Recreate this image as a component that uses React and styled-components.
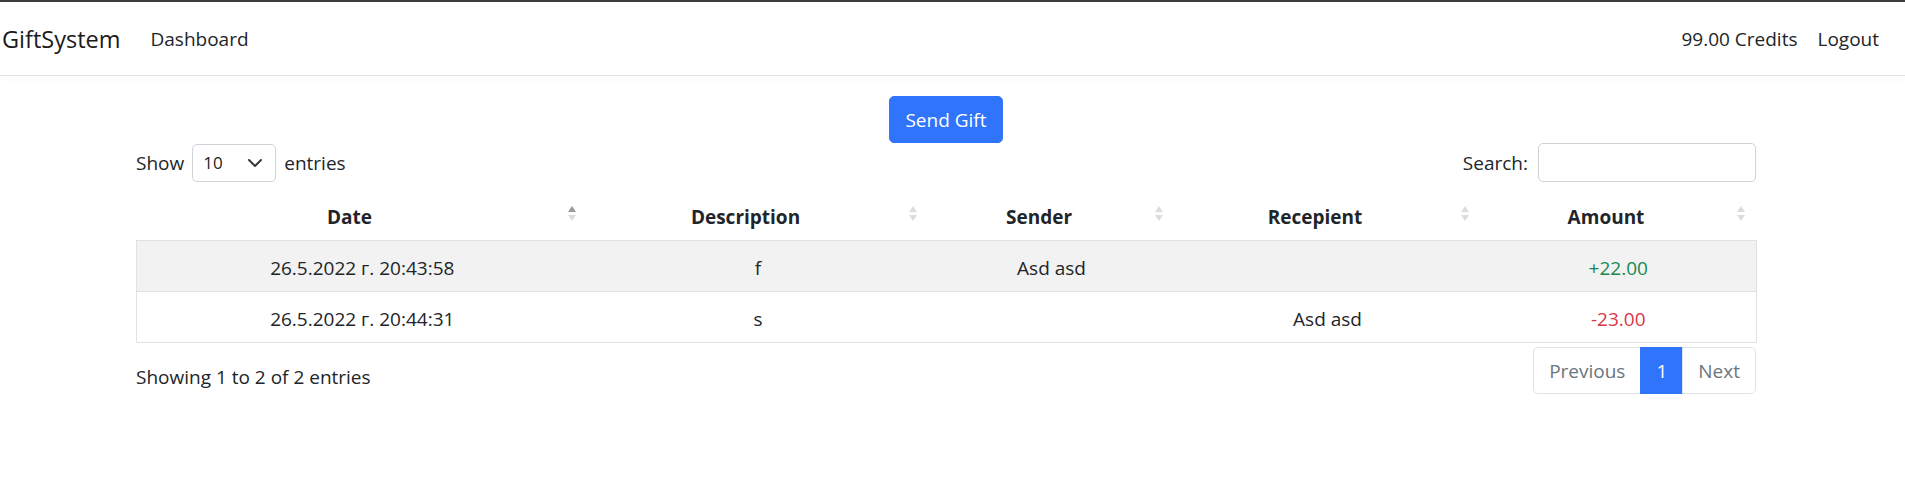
import React from 'react';
import styled, { createGlobalStyle } from 'styled-components';

const GlobalStyle = createGlobalStyle`
  html, body { margin: 0; padding: 0; background: #fff; }
  body {
    font-family: "Open Sans", "Noto Sans", sans-serif;
    font-size: 19px;
    line-height: 30px;
    color: #212529;
    border-top: 2px solid #3c3c3c;
  }
  * { box-sizing: border-box; }
`;

const Navbar = styled.nav`
  height: 74px;
  display: flex;
  align-items: center;
  padding: 0 16px 0 2px;
  border-bottom: 1px solid #dee2e6;
  box-shadow: 0 0.25rem 0.75rem rgba(0, 0, 0, 0.02);
`;

const Brand = styled.a`
  font-size: 23.5px;
  color: #1a1a1a;
  margin-right: 20px;
  text-decoration: none;
`;

const NavLink = styled.a`
  padding: 0 10px;
  color: #212529;
  text-decoration: none;
`;

const NavRight = styled.div`
  margin-left: auto;
  display: flex;
  align-items: center;
`;

const Container = styled.main`
  width: 1620px;
  margin: 20px 0 0 136px;
`;

const Center = styled.div`
  display: flex;
  justify-content: center;
`;

const PrimaryButton = styled.button`
  font-family: inherit;
  font-size: 19px;
  line-height: 30px;
  padding: 7.5px 15px;
  color: #fff;
  background: #2f74fa;
  border: 1px solid #2f74fa;
  border-radius: 5px;
`;

const Controls = styled.div`
  display: flex;
  justify-content: space-between;
  align-items: center;
  height: 39px;
`;

const Label = styled.label`
  display: flex;
  align-items: center;
  gap: ${(p) => p.$gap || 8}px;
`;

const SelectBox = styled.div`
  width: 84px;
  height: 38px;
  border: 1px solid #ced4da;
  border-radius: 5px;
  display: flex;
  align-items: center;
  justify-content: space-between;
  padding: 0 12px 0 10px;
  font-size: 17px;
`;

const SearchInput = styled.div`
  width: 218px;
  height: 39px;
  border: 1px solid #ced4da;
  border-radius: 5px;
`;

const Table = styled.table`
  width: 1620px;
  margin-top: 7px;
  border-collapse: collapse;
  table-layout: fixed;
`;

const Th = styled.th`
  position: relative;
  height: 51px;
  padding: 13px 37.5px 8px 12.5px;
  font-weight: 700;
  text-align: center;
  border-bottom: 1px solid #dee2e6;
`;

const SortIcon = styled.span`
  position: absolute;
  right: 12px;
  top: 17px;
  display: flex;
  flex-direction: column;
  gap: 3px;
`;

const Row = styled.tr`
  background: ${(p) => (p.$striped ? '#f2f2f2' : '#fff')};
  border-bottom: 1px solid #dee2e6;
  td:first-child { border-left: 1px solid #dee2e6; }
  td:last-child { border-right: 1px solid #dee2e6; }
`;

const Td = styled.td`
  height: 51px;
  padding: 12px 12.5px 8px;
  text-align: center;
  color: ${(p) => p.$color || '#212529'};
`;

const Footer = styled.div`
  display: flex;
  justify-content: space-between;
  align-items: flex-start;
  margin-top: 4px;
`;

const Info = styled.div`
  padding-top: 15px;
`;

const Pagination = styled.ul`
  display: flex;
  list-style: none;
  margin: 0;
  padding: 0;
`;

const PageLink = styled.li`
  padding: 7.5px 15px;
  line-height: 30px;
  border: 1px solid ${(p) => (p.$active ? '#2f74fa' : '#dee2e6')};
  margin-left: -1px;
  color: ${(p) => (p.$active ? '#fff' : '#6c757d')};
  background: ${(p) => (p.$active ? '#2f74fa' : '#fff')};
  &:first-child { border-radius: 5px 0 0 5px; margin-left: 0; }
  &:last-child { border-radius: 0 5px 5px 0; }
`;

const Arrow = ({ up, color }) => (
  <svg width="8" height="6" viewBox="0 0 8 6">
    <path d={up ? 'M4 0L8 6H0Z' : 'M0 0H8L4 6Z'} fill={color} />
  </svg>
);

const columns = [
  { name: 'Date', width: 451, active: true },
  { name: 'Description', width: 341 },
  { name: 'Sender', width: 246 },
  { name: 'Recepient', width: 306 },
  { name: 'Amount', width: 276 },
];

const rows = [
  { date: '26.5.2022 г. 20:43:58', desc: 'f', sender: 'Asd asd', recipient: '', amount: '+22.00', color: '#198754' },
  { date: '26.5.2022 г. 20:44:31', desc: 's', sender: '', recipient: 'Asd asd', amount: '-23.00', color: '#dc3545' },
];

export default function App() {
  return (
    <>
      <GlobalStyle />
      <Navbar>
        <Brand>GiftSystem</Brand>
        <NavLink>Dashboard</NavLink>
        <NavRight>
          <NavLink>99.00 Credits</NavLink>
          <NavLink>Logout</NavLink>
        </NavRight>
      </Navbar>
      <Container>
        <Center>
          <PrimaryButton>Send Gift</PrimaryButton>
        </Center>
        <Controls>
          <Label>
            Show
            <SelectBox>
              <span>10</span>
              <svg width="16" height="12" viewBox="0 0 16 12">
                <path d="m2 3 6 6 6-6" fill="none" stroke="#343a40" strokeWidth="2" strokeLinecap="round" strokeLinejoin="round" />
              </svg>
            </SelectBox>
            entries
          </Label>
          <Label $gap={10}>
            Search:
            <SearchInput />
          </Label>
        </Controls>
        <Table>
          <colgroup>
            {columns.map((c) => (
              <col key={c.name} style={{ width: c.width }} />
            ))}
          </colgroup>
          <thead>
            <tr>
              {columns.map((c) => (
                <Th key={c.name}>
                  {c.name}
                  <SortIcon>
                    <Arrow up color={c.active ? '#9a9a9a' : '#dcdcdc'} />
                    <Arrow color="#dcdcdc" />
                  </SortIcon>
                </Th>
              ))}
            </tr>
          </thead>
          <tbody>
            {rows.map((r, i) => (
              <Row key={r.date} $striped={i % 2 === 0}>
                <Td>{r.date}</Td>
                <Td>{r.desc}</Td>
                <Td>{r.sender}</Td>
                <Td>{r.recipient}</Td>
                <Td $color={r.color}>{r.amount}</Td>
              </Row>
            ))}
          </tbody>
        </Table>
        <Footer>
          <Info>Showing 1 to 2 of 2 entries</Info>
          <Pagination>
            <PageLink>Previous</PageLink>
            <PageLink $active>1</PageLink>
            <PageLink>Next</PageLink>
          </Pagination>
        </Footer>
      </Container>
    </>
  );
}
